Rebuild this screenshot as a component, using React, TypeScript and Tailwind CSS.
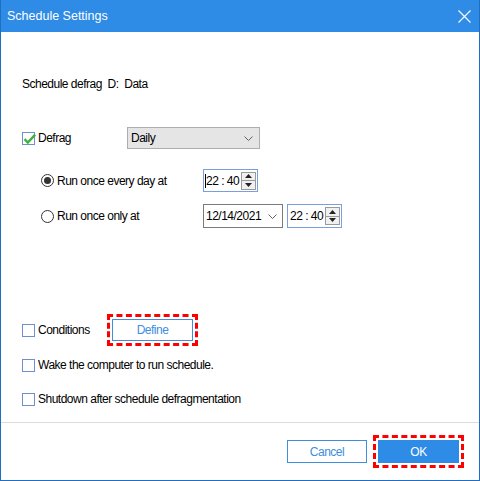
import React from 'react'

const font = { fontFamily: '"Liberation Sans", Arial, sans-serif' }

function Checkbox({ checked }: { checked?: boolean }) {
  return (
    <span className="relative flex h-[13px] w-[13px] shrink-0 items-center justify-center border border-[#6f8fce] bg-white">
      {checked && (
        <svg width="14" height="12" viewBox="0 0 14 12" className="absolute left-[0px] top-[0px]">
          <path d="M1.5 6.2 L4.8 9.5 L12.2 1.6" fill="none" stroke="#3cb43c" strokeWidth="2.4" />
        </svg>
      )}
    </span>
  )
}

function Radio({ checked }: { checked?: boolean }) {
  return (
    <span className="flex h-[13px] w-[13px] shrink-0 items-center justify-center rounded-full border border-[#333333] bg-white">
      {checked && <span className="h-[7px] w-[7px] rounded-full bg-[#333333]" />}
    </span>
  )
}

function Chevron() {
  return (
    <svg width="9" height="5" viewBox="0 0 9 5">
      <path d="M0.5 0.5 L4.5 4.5 L8.5 0.5" fill="none" stroke="#606060" strokeWidth="1" />
    </svg>
  )
}

function Spinner() {
  return (
    <span className="ml-auto mr-[1px] flex h-[18px] w-[15px] shrink-0 flex-col border border-[#9a9a9a] bg-[#f0f0f0]">
      <span className="flex flex-1 items-center justify-center border-b border-[#9a9a9a]">
        <svg width="7" height="4" viewBox="0 0 7 4">
          <path d="M0 4 L3.5 0 L7 4 Z" fill="#222" />
        </svg>
      </span>
      <span className="flex flex-1 items-center justify-center">
        <svg width="7" height="4" viewBox="0 0 7 4">
          <path d="M0 0 L3.5 4 L7 0 Z" fill="#222" />
        </svg>
      </span>
    </span>
  )
}

function TimeBox({ cursor }: { cursor?: boolean }) {
  return (
    <div className="flex h-full w-[55px] items-center whitespace-nowrap border border-[#7a9fdc] bg-white pl-[1px] text-black">
      {cursor && <span className="h-[14px] w-px shrink-0 bg-black" />}
      <span className={cursor ? '' : 'pl-[1px]'}>22 : 40</span>
      <Spinner />
    </div>
  )
}

export default function App() {
  return (
    <div
      className="flex h-[481px] w-[480px] flex-col border border-t-0 border-[#1e6fc2] bg-white text-[12px] tracking-[-0.5px] text-black"
      style={font}
    >
      <div className="flex h-[32px] shrink-0 items-center bg-[#2e8be6] pl-[6px] pr-[8px] text-[12.5px] tracking-normal text-white">
        <span>Schedule Settings</span>
        <svg className="ml-auto" width="13" height="13" viewBox="0 0 13 13">
          <path d="M0.5 0.5 L12.5 12.5 M12.5 0.5 L0.5 12.5" stroke="#ffffff" strokeWidth="1.1" />
        </svg>
      </div>

      <div className="flex flex-1 flex-col pl-[21px]">
        <div className="mt-[42px] flex h-[20px] items-center whitespace-pre">Schedule defrag  D:  Data</div>

        <div className="mt-[33px] flex h-[22px] items-center">
          <div className="flex w-[105px] items-center gap-[3px]">
            <Checkbox checked />
            <span>Defrag</span>
          </div>
          <div className="flex h-full w-[133px] items-center border border-[#adadad] bg-[#e5e5e5] pl-[3px] pr-[6px]">
            <span>Daily</span>
            <span className="ml-auto">
              <Chevron />
            </span>
          </div>
        </div>

        <div className="mt-[20px] flex h-[23px] items-center pl-[19px]">
          <div className="flex w-[162px] items-center gap-[3px]">
            <Radio checked />
            <span>Run once every day at</span>
          </div>
          <TimeBox cursor />
        </div>

        <div className="mt-[12px] flex h-[24px] items-center pl-[19px]">
          <div className="flex w-[162px] items-center gap-[3px]">
            <Radio />
            <span>Run once only at</span>
          </div>
          <div className="flex h-full w-[80px] items-center whitespace-nowrap border border-[#7a7a7a] bg-white pl-[2px] pr-[5px]">
            <span>12/14/2021</span>
            <span className="ml-auto">
              <Chevron />
            </span>
          </div>
          <div className="ml-[4px] h-full">
            <TimeBox />
          </div>
        </div>

        <div className="mt-[91px] flex h-[22px] items-center">
          <div className="flex w-[90px] items-center gap-[3px]">
            <Checkbox />
            <span>Conditions</span>
          </div>
          <button className="flex h-full w-[81px] items-center justify-center border border-[#3d8ee0] bg-white text-[#3d8ee0] outline-3 outline-offset-2 outline-dashed outline-[#ff0000]">
            Define
          </button>
        </div>

        <div className="mt-[14px] flex h-[20px] items-center gap-[3px]">
          <Checkbox />
          <span>Wake the computer to run schedule.</span>
        </div>

        <div className="mt-[14px] flex h-[20px] items-center gap-[3px]">
          <Checkbox />
          <span>Shutdown after schedule defragmentation</span>
        </div>
      </div>

      <div className="flex h-[58px] shrink-0 items-start justify-end gap-[11px] border-t border-[#dcdcdc] pr-[20px] pt-[17px]">
        <button className="h-[23px] w-[80px] border border-[#3d8ee0] bg-white text-[#3d8ee0]">Cancel</button>
        <button className="h-[23px] w-[81px] bg-[#2e8be6] text-white outline-3 outline-offset-2 outline-dashed outline-[#ff0000]">
          OK
        </button>
      </div>
    </div>
  )
}
